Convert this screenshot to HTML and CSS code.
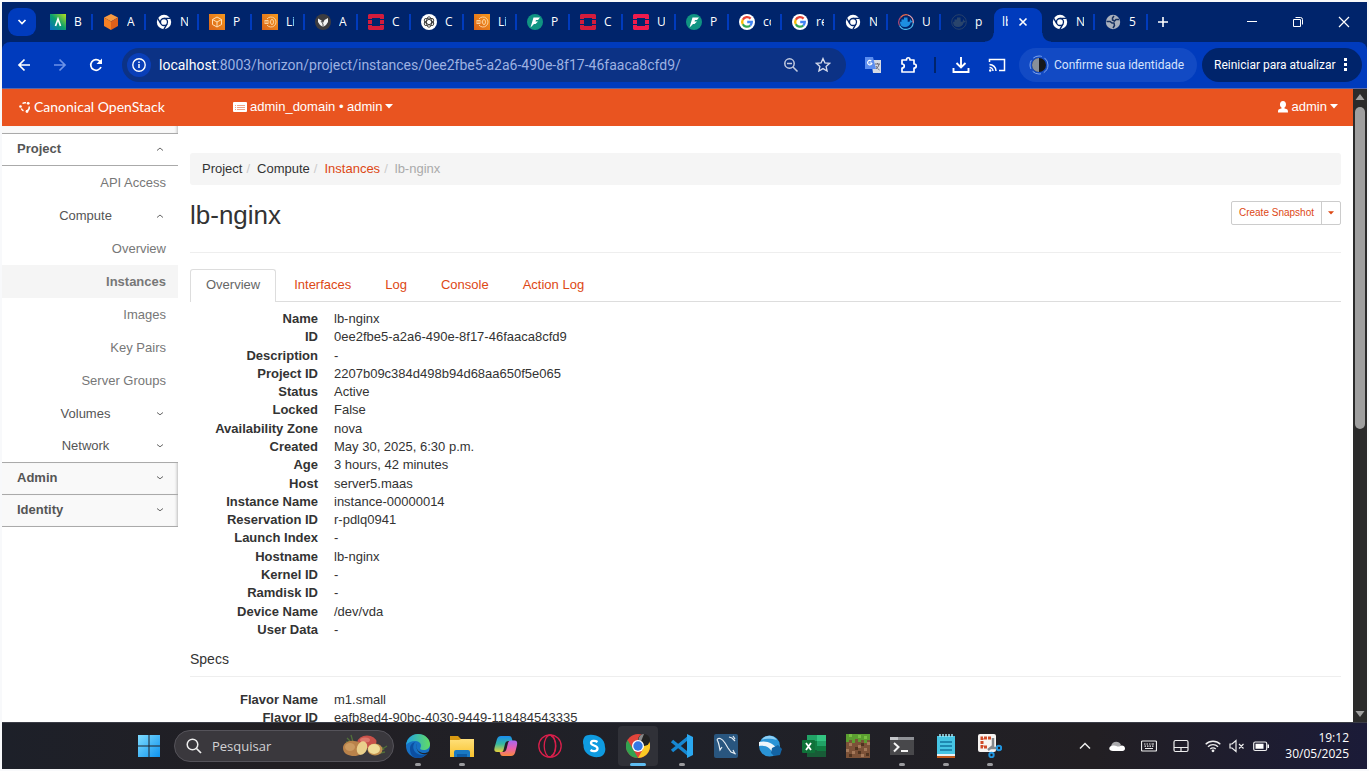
FILE: index.html
```html
<!DOCTYPE html>
<html lang="pt-BR">
<head>
<meta charset="utf-8">
<title>lb-nginx - Canonical OpenStack</title>
<link rel="stylesheet" href="styles.css">
</head>
<body>
<svg class="sprite" aria-hidden="true">
  <defs>
    <linearGradient id="g-orange" x1="0" y1="1" x2="1" y2="0"><stop offset="0" stop-color="#d9641a"/><stop offset="1" stop-color="#f7981d"/></linearGradient>
    <linearGradient id="g-green" x1="0" y1="1" x2="1" y2="0"><stop offset="0" stop-color="#0868c8"/><stop offset=".5" stop-color="#0aa06e"/><stop offset="1" stop-color="#b6e01c"/></linearGradient>
    <linearGradient id="g-win" x1="0" y1="0" x2="1" y2="1"><stop offset="0" stop-color="#7fdcff"/><stop offset="1" stop-color="#0e93ee"/></linearGradient>
    <linearGradient id="g-edge" x1="0" y1="0" x2="1" y2="0"><stop offset="0" stop-color="#1fa2e4"/><stop offset="1" stop-color="#62dc63"/></linearGradient>
    <linearGradient id="g-cop1" x1="0" y1="0" x2="0" y2="1"><stop offset="0" stop-color="#1a8df0"/><stop offset=".5" stop-color="#35b8a0"/><stop offset="1" stop-color="#e8d23a"/></linearGradient>
    <linearGradient id="g-cop2" x1="0" y1="0" x2="0" y2="1"><stop offset="0" stop-color="#a767f0"/><stop offset=".5" stop-color="#e85fb0"/><stop offset="1" stop-color="#f98a3c"/></linearGradient>
    <linearGradient id="g-fold" x1="0" y1="0" x2="0" y2="1"><stop offset="0" stop-color="#ffe07a"/><stop offset="1" stop-color="#f8c22e"/></linearGradient>
  </defs>
  <symbol id="i-chromium" viewBox="0 0 16 16"><circle cx="8" cy="8" r="7.200" fill="#fff"/><path d="M8 4.400h6.500M4.900 9.800 1.600 4.200M11.100 9.800l-3.400 5.800" stroke="#00246b" stroke-width="1.300"/><circle cx="8" cy="8" r="3.500" fill="#fff" stroke="#00246b" stroke-width="1.300"/></symbol>
  <symbol id="i-stack" viewBox="0 0 16 16"><path d="M1 0h14l1 1v4h-4V4H4v1H0V1zM0 6h4v4H0zM12 6h4v4h-4zM0 11h4v1h8v-1h4v4l-1 1H1l-1-1z"/></symbol>
  <symbol id="i-list" viewBox="0 0 16 16"><path fill="url(#g-orange)" d="M0 0h16v16H0z"/><g fill="none" stroke="#ffd9a8" stroke-width=".9"><path d="M5 5a5 5 0 1 1 0 6"/><ellipse cx="10" cy="8" rx="1.500" ry="2.600"/><path d="M2.500 6.500h4M2 8h5.500M2.500 9.500h4"/></g></symbol>
  <symbol id="i-flash" viewBox="0 0 16 16"><circle cx="8" cy="8" r="8" fill="#109482"/><path fill="#fff" d="M6.500 3.500H13l-2 2.500H9L8.500 7.500H11L8.500 10H7l-3.500 3.500z"/></symbol>
  <symbol id="i-google" viewBox="0 0 16 16"><circle cx="8" cy="8" r="8" fill="#fff"/><g fill="none" stroke-width="2.300"><path stroke="#ea4335" d="M11.600 4.600A4.800 4.800 0 0 0 3.800 5.800"/><path stroke="#fbbc05" d="M3.800 5.600a4.800 4.800 0 0 0 0 4.700"/><path stroke="#34a853" d="M3.800 10.200a4.800 4.800 0 0 0 7.400 1.300"/><path stroke="#4285f4" d="M11.200 11.600A4.800 4.800 0 0 0 12.800 8H8.200"/></g></symbol>
  <symbol id="i-whale" viewBox="0 0 16 16"><path d="M2 7.700h9.500c.6-.8.200-1.700.7-2.500.8.500 1.100 1.100 1.200 1.700.6 0 1 .1 1.400.4-.5 1-1.300 1.300-2.100 1.300C12 11.600 10 13 7 13c-3.300 0-5-1.800-5-5.300zM3.500 5.500h6.200v2.400H3.500zM6 3.500h3.500v2H6z"/></symbol>
  <symbol id="i-up" viewBox="0 0 8 8"><path d="M1 5.500 4 3l3 2.500" fill="none" stroke="#666"/></symbol>
  <symbol id="i-down" viewBox="0 0 8 8"><path d="M1 2.500 4 4.800l3-2.300" fill="none" stroke="#666"/></symbol>
  <symbol id="i-caret" viewBox="0 0 8 5"><path d="M0 0h8L4 4.500z" fill="currentColor"/></symbol>
</svg>

<header class="browser">
  <div class="tabstrip">
    <button class="tabsearch" aria-label="Pesquisar guias"><svg viewBox="0 0 10 10" width="10" height="10"><path d="m1.500 3 3.500 3.500L8.500 3" fill="none" stroke="#fff" stroke-width="1.700"/></svg></button>
    <nav class="tabs" aria-label="Guias">
      <button class="tab"><svg class="fav" viewBox="0 0 16 16"><path fill="url(#g-green)" d="M0 0h16v16H0z"/><path d="M5.500 12 8 5l2.500 7" fill="none" stroke="#fff" stroke-width="1.700"/></svg><span>B</span></button>
      <button class="tab"><svg class="fav" viewBox="0 0 16 16"><path fill="#f79a42" d="m8 0 7 3.500L8 7.500 1 3.500z"/><path fill="#f58024" d="M1 3.500 8 7.500V16l-7-4z"/><path fill="#e0601a" d="M15 3.500 8 7.500V16l7-4z"/></svg><span>A</span></button>
      <button class="tab"><svg class="fav"><use href="#i-chromium"/></svg><span>N</span></button>
      <button class="tab"><svg class="fav" viewBox="0 0 16 16"><path fill="url(#g-orange)" d="M0 0h16v16H0z"/><path d="m8 3 4.500 2.500v5L8 13l-4.500-2.500v-5zM3.500 5.500 8 8l4.500-2.500M8 8v5" fill="none" stroke="#ffe0b8"/></svg><span>P</span></button>
      <button class="tab"><svg class="fav"><use href="#i-list"/></svg><span>Li</span></button>
      <button class="tab"><svg class="fav" viewBox="0 0 16 16"><circle cx="8" cy="8" r="8" fill="#3c3c40"/><path fill="#f4f4f4" d="m3 4.500 3.500 2L8 9l1.500-3L13 4v4l-2 3-3 2-3-2-2-3z"/><path d="m6 7 2 3v3" stroke="#555" fill="none"/></svg><span>A</span></button>
      <button class="tab"><svg class="fav stack"><use href="#i-stack"/></svg><span>C</span></button>
      <button class="tab"><svg class="fav" viewBox="0 0 16 16"><circle cx="8" cy="8" r="8" fill="#fff"/><g fill="none" stroke="#333" stroke-width=".9"><ellipse cx="8" cy="8" rx="2.500" ry="5.200"/><ellipse cx="8" cy="8" rx="2.500" ry="5.200" transform="rotate(60 8 8)"/><ellipse cx="8" cy="8" rx="2.500" ry="5.200" transform="rotate(120 8 8)"/></g></svg><span>C</span></button>
      <button class="tab"><svg class="fav"><use href="#i-list"/></svg><span>Li</span></button>
      <button class="tab"><svg class="fav"><use href="#i-flash"/></svg><span>P</span></button>
      <button class="tab"><svg class="fav stack"><use href="#i-stack"/></svg><span>C</span></button>
      <button class="tab"><svg class="fav stack bright"><use href="#i-stack"/></svg><span>U</span></button>
      <button class="tab"><svg class="fav"><use href="#i-flash"/></svg><span>P</span></button>
      <button class="tab"><svg class="fav"><use href="#i-google"/></svg><span>co</span></button>
      <button class="tab"><svg class="fav"><use href="#i-google"/></svg><span>re</span></button>
      <button class="tab"><svg class="fav"><use href="#i-chromium"/></svg><span>N</span></button>
      <button class="tab"><svg class="fav whale" viewBox="0 0 16 16"><use href="#i-whale"/><g fill="none" stroke-width="1.200"><path stroke="#e8694a" d="M2.500 3.500A7.300 7.300 0 0 1 10 1"/><path stroke="#e9a3b0" d="M10 1a7.300 7.300 0 0 1 5.200 8"/><path stroke="#4fb8e8" d="M15.200 9A7.300 7.300 0 0 1 1.500 11.500"/><path stroke="#b04a74" d="M1.500 11.500a7.300 7.300 0 0 1 1-8"/></g></svg><span>U</span></button>
      <button class="tab last"><svg class="fav dim" viewBox="0 0 16 16"><use href="#i-whale"/><circle cx="8" cy="8" r="7.300" fill="none" stroke="#27406a"/></svg><span>p</span></button>
      <button class="tab active"><span>lb</span><svg class="close" viewBox="0 0 10 10"><path d="m1.500 1.500 7 7m0-7-7 7" stroke="#fff" stroke-width="1.600"/></svg></button>
      <button class="tab"><svg class="fav"><use href="#i-chromium"/></svg><span>N</span></button>
      <button class="tab"><svg class="fav" viewBox="0 0 16 16"><circle cx="8" cy="8" r="7.200" fill="#a9b0bd"/><path d="M1.500 7.500H5l2 1.500h2l.5 2.500L8 14M14 5.500h-3L9.500 7 7.500 6V4L9 2" fill="none" stroke="#17305f" stroke-width="1.500"/></svg><span>5</span></button>
    </nav>
    <button class="newtab" aria-label="Nova guia"><svg viewBox="0 0 12 12" width="12" height="12"><path d="M6 1v10M1 6h10" stroke="#fff" stroke-width="1.600"/></svg></button>
    <div class="winctl">
      <button aria-label="Minimizar"><svg viewBox="0 0 12 12" width="12" height="12"><path d="M1 5.500h10" stroke="#fff"/></svg></button>
      <button aria-label="Restaurar"><svg viewBox="0 0 12 12" width="12" height="12"><path d="M1.500 3.500h7v7h-7zM3.500 1.500h5q2 0 2 2v5" fill="none" stroke="#fff"/></svg></button>
      <button aria-label="Fechar"><svg viewBox="0 0 12 12" width="12" height="12"><path d="m1 1 10 10m0-10L1 11" stroke="#fff" stroke-width="1.200"/></svg></button>
    </div>
  </div>

  <div class="toolbar">
    <button class="nav" aria-label="Voltar"><svg viewBox="0 0 16 16" width="16" height="16"><path d="M14 8H3m5.500-5.500L3 8l5.500 5.500" fill="none" stroke="#fff" stroke-width="1.700"/></svg></button>
    <button class="nav" aria-label="Avançar"><svg viewBox="0 0 16 16" width="16" height="16"><path d="M2 8h11M7.500 2.500 13 8l-5.500 5.500" fill="none" stroke="#6d93e8" stroke-width="1.700"/></svg></button>
    <button class="nav" aria-label="Recarregar"><svg viewBox="0 0 16 16" width="16" height="16"><path d="M13 10a5.300 5.300 0 1 1-1.200-5.800L13.500 6" fill="none" stroke="#fff" stroke-width="1.700"/><path d="M14 1.500V7H8.500z" fill="#fff"/></svg></button>
    <div class="omnibox">
      <button class="info" aria-label="Informações do site"><svg viewBox="0 0 16 16" width="16" height="16"><circle cx="8" cy="8" r="6.200" fill="none" stroke="#fff" stroke-width="1.400"/><path d="M8 7v4M8 4.500V6" stroke="#fff" stroke-width="1.500"/></svg></button>
      <label class="host" for="url">localhost</label><input id="url" type="text" value=":8003/horizon/project/instances/0ee2fbe5-a2a6-490e-8f17-46faaca8cfd9/">
      <button aria-label="Zoom"><svg viewBox="0 0 16 16" width="16" height="16"><path d="m10 10 4.500 4.500M4 6.500h5" stroke="#c3cbe0" stroke-width="1.500"/><circle cx="6.500" cy="6.500" r="4.700" fill="none" stroke="#c3cbe0" stroke-width="1.500"/></svg></button>
      <button aria-label="Favorito"><svg viewBox="0 0 16 16" width="16" height="16"><path d="m8 1.500 1.900 4.300 4.700.5-3.500 3.100 1 4.600L8 11.600 3.900 14l1-4.600-3.500-3.100 4.700-.5z" fill="none" stroke="#d5dbec" stroke-width="1.300"/></svg></button>
    </div>
    <div class="tools">
      <button aria-label="Tradutor"><svg viewBox="0 0 18 18" width="18" height="18"><path fill="#d5dae4" d="M7 4h10v13H9z"/><path fill="#5b8def" d="M1 1h8l3 12H1z"/><path d="M8 7H5.500M7.300 5A2.200 2.200 0 1 0 8 7" fill="none" stroke="#fff" stroke-width="1.200"/><path d="M11 8h5M13.500 7v1m1.500 0c-.5 3-2 4-3 5m0-3c1 2 2 3 3.500 4" fill="none" stroke="#667"/></svg></button>
      <button aria-label="Extensões"><svg viewBox="0 0 18 18" width="18" height="18"><path d="M2 4h4.500c0-3 3.500-3 3.500 0h4v4c3 0 3 4 0 4v4H2v-4c3 0 3-4 0-4z" fill="none" stroke="#fff" stroke-width="1.700" stroke-linejoin="round"/></svg></button>
      <i class="divider"></i>
      <button aria-label="Downloads"><svg viewBox="0 0 18 18" width="18" height="18"><path d="M9 1v10M4.500 7 9 11.500 13.500 7M1.500 12v4h15v-4" fill="none" stroke="#fff" stroke-width="1.900"/></svg></button>
      <button aria-label="Transmitir"><svg viewBox="0 0 18 18" width="18" height="18"><path d="M1.500 6V3.500h15v11H11M1.500 8.500a6.500 6.500 0 0 1 6.500 6.500M1.500 11.500A3.500 3.500 0 0 1 5 15" fill="none" stroke="#fff" stroke-width="1.500"/><circle cx="2.200" cy="14.500" r="1.200" fill="#fff"/></svg></button>
    </div>
    <button class="chip"><svg viewBox="0 0 20 20" width="20" height="20"><circle cx="10" cy="10" r="9" fill="none" stroke="#7ea4ee" stroke-dasharray="9 3"/><circle cx="10" cy="10" r="7" fill="#16181c"/><path d="M10 3a7 7 0 0 0 0 14z" fill="#88909a"/></svg>Confirme sua identidade</button>
    <button class="chip dark">Reiniciar para atualizar<svg viewBox="0 0 4 16" width="4" height="16"><path fill="#fff" d="M0 1h3v3H0zm0 5h3v3H0zm0 5h3v3H0z"/></svg></button>
  </div>
</header>

<div class="viewport">
  <div class="page">
    <div class="navbar">
      <a class="brand" href="#"><svg viewBox="0 0 12 12" width="12" height="12"><g fill="none" stroke="#fff" stroke-width="1.500"><path d="M3.500 2.500A4.200 4.200 0 0 1 7 1.800M10.200 5.500a4.200 4.200 0 0 1-3 4.600M4.500 9.800A4.200 4.200 0 0 1 2.300 7.500"/></g><circle cx="1.500" cy="5.500" r="1.300" fill="#fff"/><circle cx="9.200" cy="2.300" r="1.400" fill="#fff"/><circle cx="8" cy="10.500" r="1.400" fill="#fff"/></svg>Canonical OpenStack</a>
      <button class="context"><svg viewBox="0 0 14 12" width="14" height="12"><rect y="1" width="14" height="10" rx="1" fill="#fff"/><path d="M2 4.500h1m1 0h8M2 6.500h1m1 0h8M2 8.500h1m1 0h8" stroke="#f0a488"/></svg>admin_domain • admin<svg width="8" height="5"><use href="#i-caret"/></svg></button>
      <button class="user"><svg viewBox="0 0 12 12" width="12" height="12"><path fill="#fff" d="M6 0c4 0 3.500 6 1.500 6.500v1c3 .5 3.500 1 3.500 4H1c0-3 .5-3.500 3.500-4v-1C2.500 6 2 0 6 0z"/></svg>admin<svg width="8" height="5"><use href="#i-caret"/></svg></button>
    </div>
    <div class="columns">
      <nav class="sidebar" aria-label="Painéis">
        <button class="panel open">Project<svg><use href="#i-up"/></svg></button>
        <a class="item" href="#">API Access</a>
        <button class="group"><span>Compute</span><svg><use href="#i-up"/></svg></button>
        <a class="item" href="#">Overview</a>
        <a class="item current" href="#">Instances</a>
        <a class="item" href="#">Images</a>
        <a class="item" href="#">Key Pairs</a>
        <a class="item" href="#">Server Groups</a>
        <button class="group"><span>Volumes</span><svg><use href="#i-down"/></svg></button>
        <button class="group"><span>Network</span><svg><use href="#i-down"/></svg></button>
        <button class="panel">Admin<svg><use href="#i-down"/></svg></button>
        <button class="panel">Identity<svg><use href="#i-down"/></svg></button>
      </nav>
      <main class="content">
        <ol class="breadcrumb"><li>Project</li><li>Compute</li><li><a href="#">Instances</a></li><li class="here">lb-nginx</li></ol>
        <div class="heading">
          <h1>lb-nginx</h1>
          <div class="actions"><button>Create Snapshot</button><button aria-label="Mais ações"><svg width="6" height="4"><use href="#i-caret"/></svg></button></div>
        </div>
        <nav class="pills"><a class="on" href="#">Overview</a><a href="#">Interfaces</a><a href="#">Log</a><a href="#">Console</a><a href="#">Action Log</a></nav>
        <dl class="details overview">
          <dt>Name</dt><dd>lb-nginx</dd>
          <dt>ID</dt><dd>0ee2fbe5-a2a6-490e-8f17-46faaca8cfd9</dd>
          <dt>Description</dt><dd>-</dd>
          <dt>Project ID</dt><dd>2207b09c384d498b94d68aa650f5e065</dd>
          <dt>Status</dt><dd>Active</dd>
          <dt>Locked</dt><dd>False</dd>
          <dt>Availability Zone</dt><dd>nova</dd>
          <dt>Created</dt><dd>May 30, 2025, 6:30 p.m.</dd>
          <dt>Age</dt><dd>3 hours, 42 minutes</dd>
          <dt>Host</dt><dd>server5.maas</dd>
          <dt>Instance Name</dt><dd>instance-00000014</dd>
          <dt>Reservation ID</dt><dd>r-pdlq0941</dd>
          <dt>Launch Index</dt><dd>-</dd>
          <dt>Hostname</dt><dd>lb-nginx</dd>
          <dt>Kernel ID</dt><dd>-</dd>
          <dt>Ramdisk ID</dt><dd>-</dd>
          <dt>Device Name</dt><dd>/dev/vda</dd>
          <dt>User Data</dt><dd>-</dd>
        </dl>
        <h2>Specs</h2>
        <dl class="details"><dt>Flavor Name</dt><dd>m1.small</dd><dt>Flavor ID</dt><dd>eafb8ed4-90bc-4030-9449-118484543335</dd></dl>
      </main>
    </div>
  </div>
  <div class="scrollbar" aria-hidden="true">
    <svg viewBox="0 0 10 8" width="10" height="8"><path d="M5 1 9.500 7h-9z" fill="#9f9f9f"/></svg>
    <div class="track"><div class="thumb"></div></div>
    <svg viewBox="0 0 10 8" width="10" height="8"><path d="M5 7 .5 1h9z" fill="#9f9f9f"/></svg>
  </div>
</div>

<footer class="taskbar">
  <div class="apps">
    <button class="app" aria-label="Iniciar"><svg viewBox="0 0 24 24"><path fill="url(#g-win)" d="M1 1h10.500v10.500H1zM12.500 1H23v10.500H12.500zM1 12.500h10.500V23H1zM12.500 12.500H23V23H12.500z"/></svg></button>
    <div class="search">
      <svg viewBox="0 0 16 16" width="16" height="16"><circle cx="6.500" cy="6.500" r="5.300" fill="none" stroke="#eee" stroke-width="1.500"/><path d="m10.500 10.500 4.500 4.500" stroke="#eee" stroke-width="1.700"/></svg>
      <input type="text" aria-label="Pesquisar" placeholder="Pesquisar">
      <svg viewBox="0 0 46 24" width="46" height="24"><path d="M5 4l6 6M9 1l2 7M4 8l8 1M36 18l9-6M38 19l5-1M40 13l2 3" stroke="#52703a" stroke-width="1.300"/><ellipse cx="25" cy="8" rx="9.500" ry="6.500" fill="#c8514a"/><ellipse cx="23" cy="6" rx="5" ry="2.500" fill="#dc776b"/><path d="M1 14c0-5 6-8 11-7 6 0 10 4 10 8 0 5-5 7-10 7S1 20 1 14z" fill="#b9824a"/><ellipse cx="8" cy="13" rx="5" ry="4" fill="#cb9a60"/><ellipse cx="20" cy="14" rx="5" ry="7" fill="#ead08c" transform="rotate(20 20 14)"/><ellipse cx="33" cy="15.500" rx="7.500" ry="6" fill="#c09050"/><ellipse cx="32" cy="15" rx="6" ry="5" fill="#f0dc98"/></svg>
    </div>
    <button class="app run" aria-label="Edge"><svg viewBox="0 0 24 24"><circle cx="12" cy="12" r="12" fill="#1670c4"/><path d="M0 11C1 4 6 0 12 0c7 0 12 5 12 10 0 4-3 6-6.500 6-3 0-4-1-3-2.500C16 11 14 7 9.500 7 5 7 1.500 9 0 11z" fill="url(#g-edge)"/><path d="M9 8c-4 5-1 12 6 13 3 0 5-1 6.500-2.500C19.500 22 16 24 12 24 6 24 4 19 4 15s2-6 5-7z" fill="#0c4fa0"/><path d="M11 10c-1.500 3 0 7 4 8.500 3 1 6 .5 8-1 .3 1-.5 1.500-1 2-3 1.500-8 1-10.500-3C10 14 10 11 11 10z" fill="#202126"/></svg></button>
    <button class="app run" aria-label="Explorador de Arquivos"><svg viewBox="0 0 24 24"><path fill="#d99a12" d="M0 2h8l3 3h13v4H0z"/><path fill="url(#g-fold)" d="M0 6h9l2-1h13v18H0z"/><path fill="#1979c4" d="M4 23v-5q0-2 2-2h12q2 0 2 2v5h-3v-3H7v3z"/><path fill="#0d5ca5" d="M7 20h10v3H7z"/></svg></button>
    <button class="app" aria-label="Copilot"><svg viewBox="0 0 24 24"><path fill="url(#g-cop1)" d="M7 2h8c2 0 2.500 1 3 3l.5 2h-4c-2 0-3 1-3.500 3l-1.500 6C9 18 8 18 6 18H3c-3 0-3-2-2.300-5L3 5c.8-2 2-3 4-3z"/><path fill="url(#g-cop2)" d="M17 22H9c-2 0-2.500-1-3-3l-.5-1H9c2 0 3-1 3.500-3L14 9c.5-2 1.500-2.500 3.500-2.500h3c3 0 3 2.500 2.300 5.500L21 19c-.8 2-2 3-4 3z"/></svg></button>
    <button class="app" aria-label="Opera"><svg viewBox="0 0 24 24" fill="none" stroke="#d91f4b" stroke-width="1.300"><circle cx="12" cy="12" r="11.200"/><ellipse cx="12" cy="12" rx="5.800" ry="11"/><path d="M13 2c6 3 6 17 0 20"/></svg></button>
    <button class="app" aria-label="Skype"><svg viewBox="0 0 24 24"><path fill="#0f9be0" d="M7 1c7-1 16 3 16 12 1 3 0 9-6 10C9 24 1 19 1.500 11 0 6 2 1 7 1z"/><path d="M15.500 8C13 6.300 9 6.500 9 9c0 3 6.500 2 6.500 5.500 0 3-4.500 3.500-7 1.500" fill="none" stroke="#fff" stroke-width="2.300"/></svg></button>
    <button class="app run focus" aria-label="Chrome"><svg viewBox="0 0 24 24"><circle cx="12" cy="12" r="12" fill="#e1443a"/><path fill="#32a350" d="M1.500 6 7 15l5 9A12 12 0 0 1 1.500 6z"/><path fill="#fbc924" d="M12 24l5-9V7h6a12 12 0 0 1-11 17z"/><circle cx="18" cy="6" r="6" fill="#222"/><path fill="#888" d="M18 0a6 6 0 0 0-4 10z"/><circle cx="12" cy="12" r="6" fill="#fff"/><circle cx="12" cy="12" r="4.700" fill="#3478e5"/></svg></button>
    <button class="app run" aria-label="VS Code"><svg viewBox="0 0 24 24"><path d="m2 7 16 13M2 17 18 4" stroke="#1688d2" stroke-width="3.500" fill="none"/><path d="m17 0 6 3v18l-6 3z" fill="#2aa8f0"/></svg></button>
    <button class="app" aria-label="MySQL Workbench"><svg viewBox="0 0 24 24"><rect width="24" height="24" rx="2" fill="#29567f"/><path d="M3 6c1-3 5-2 8 3l3 5 3 4 5 2m-3-4 2 4M3 6c2 2 2 6 3 10l2-3m7-10 3 1 3 3m-2-5 2 3" fill="none" stroke="#e6edf3" stroke-width="1.200"/></svg></button>
    <button class="app" aria-label="Workspace"><svg viewBox="0 0 24 24"><circle cx="11.500" cy="12" r="10.500" fill="#2a94d6"/><path fill="#eef6fb" d="M1 8c7-2 15 1 19 8l-5 4C13 14 8 11 1 12z"/><path fill="#8fd0f5" d="M3 6c4-5 12-6 16 0-5-1-11-2-16 0z"/><path fill="#1364a4" d="m14 14 6-3 4 4-2 6-6 1-3-3z"/></svg></button>
    <button class="app" aria-label="Excel"><svg viewBox="0 0 24 24"><path fill="#21a366" d="M5 1h19v22H5z"/><path fill="#33c481" d="M15 1h9v6h-9z"/><path fill="#185c37" d="M5 16h19v7H5z"/><path fill="#107c41" d="M15 12h9v5h-9zM5 7h10v9H5z"/><rect y="6" width="13" height="13" rx="1" fill="#0f7239"/><path d="m4 9 5 7m0-7-5 7" stroke="#fff" stroke-width="1.800"/></svg></button>
    <button class="app" aria-label="Minecraft"><svg viewBox="0 0 24 24"><path fill="#7c5238" d="M0 0h24v24H0z"/><path fill="#5b9f31" d="M0 0h24v6h-3v3h-3V6h-3v2h-3V5H9v4H6V6H3v2H0z"/><path fill="#78c043" d="M3 0h3v3H3zM12 1h3v3h-3zM18 2h3v3h-3z"/><path fill="#a5795a" d="M3 9h3v3H3zM12 11h3v3h-3zM18 14h3v3h-3zM6 17h3v3H6zM15 20h3v3h-3zM0 15h3v3H0zM21 8h3v3h-3z"/><path fill="#503420" d="M9 13h3v3H9zM3 20h3v3H3zM15 9h3v3h-3zM20 19h3v3h-3zM12 17h3v3h-3z"/></svg></button>
    <button class="app run" aria-label="Terminal"><svg viewBox="0 0 24 24"><path fill="#48484b" d="M0 3h24v18H0z"/><path fill="#c4c6ca" d="M0 3h24v3H0z"/><path fill="#8f9196" d="M8 3h16v3H8z"/><path d="m4 9 4.500 4L4 17.500M11 17h7" fill="none" stroke="#f4f4f4" stroke-width="2"/></svg></button>
    <button class="app run" aria-label="Bloco de Notas"><svg viewBox="0 0 24 24"><path fill="#46c5e4" d="M3 2h18v19H3z"/><path fill="#e8f3f7" d="M3 20h18v2H3z"/><path fill="#c35a1c" d="M3 22h18v2H3z"/><path d="M6 0v3m3-3v3m3-3v3m3-3v3m3-3v3" stroke="#a5e6f5" stroke-width="1.500"/><path d="M6 8h12M6 12h12M6 16h12" stroke="#12749f" stroke-width="1.600"/></svg></button>
    <button class="app run" aria-label="Ferramenta de Captura"><svg viewBox="0 0 24 24"><rect width="18" height="18" rx="2" fill="#f7f4f2"/><path d="M13 4H4v9h5" fill="none" stroke="#d04a28" stroke-width="3" stroke-dasharray="3 1"/><path d="M15 4v8l-5 4M13 14h7" stroke="#85888c" stroke-width="2.500" fill="none"/><circle cx="21" cy="14" r="2.200" fill="none" stroke="#2196e0" stroke-width="2"/><circle cx="13.500" cy="21" r="2.200" fill="none" stroke="#2196e0" stroke-width="2"/></svg></button>
  </div>
  <div class="tray">
    <svg viewBox="0 0 16 16"><path d="m3 10.500 5-5 5 5" fill="none" stroke="#eee" stroke-width="1.500"/></svg>
    <svg viewBox="0 0 16 16"><path fill="#a9a9ac" d="M2 8c1-5 8-6 10-1l-5 5z"/><path fill="#fff" d="M4 13c-5 0-5-5 0-5.500 3-.5 4 1.500 6 1 3-2 6-.5 6 2 0 1.500-1 2.500-2.500 2.500z"/></svg>
    <svg viewBox="0 0 16 16"><rect x=".5" y="3" width="15" height="10" rx="1" fill="none" stroke="#eee" stroke-width="1.200"/><path d="M3 6h1.500m1 0H7m1 0h1.500m1 0H13M3.500 8.200H5m1 0h1.500m1 0H10m1 0h1.500M4 10.500h8" stroke="#eee" stroke-width="1.200"/></svg>
    <svg viewBox="0 0 16 16"><rect x="1" y="2.500" width="14" height="11" rx="1.500" fill="none" stroke="#eee" stroke-width="1.200"/><path d="M1 9.500h14m-7 0v4" stroke="#eee" stroke-width="1.200"/></svg>
    <div class="status">
      <svg viewBox="0 0 16 16"><g fill="none" stroke="#eee" stroke-width="1.400"><path d="M.7 6.300a10.300 10.300 0 0 1 14.600 0M3 8.700a7 7 0 0 1 10 0M5.300 11a3.800 3.800 0 0 1 5.400 0"/></g><circle cx="8" cy="12.800" r="1.400" fill="#eee"/></svg>
      <svg viewBox="0 0 16 16"><path d="M1 6h2l4-3.500v11L3 10H1zM10 6l4.500 4.500m0-4.500L10 10.500" fill="none" stroke="#eee" stroke-width="1.200"/></svg>
      <svg viewBox="0 0 16 16"><rect x=".7" y="4" width="13" height="8.500" rx="1.500" fill="none" stroke="#eee" stroke-width="1.200"/><path d="M2.500 5.700h8v5h-8zM14.500 6.500H16V10h-1.500z" fill="#fff"/></svg>
    </div>
    <time class="clock"><span>19:12</span><span>30/05/2025</span></time>
  </div>
</footer>
</body>
</html>
```
FILE: styles.css
```css
* { box-sizing: border-box; }

body {
  margin: 0;
  padding: 2px;
  height: 100vh;
  display: flex;
  flex-direction: column;
  overflow: hidden;
  background: #f8f9fb;
  color: #333;
  font: 13px/18px "Liberation Sans", Arial, sans-serif;
}

button {
  border: 0;
  padding: 0;
  background: none;
  color: inherit;
  font: inherit;
}

input { border: 0; padding: 0; background: none; font: inherit; outline: 0; }
a { color: #dd4814; text-decoration: none; }
svg { display: block; flex: none; }
.sprite { position: absolute; width: 0; height: 0; }

/* Browser frame */
.browser {
  background: #00246b;
  color: #fff;
  font: 12px/16px "Open Sans", "Noto Sans", sans-serif;
  border-bottom: 1px solid #5a68a8;
}

.tabstrip { display: flex; height: 40px; }

.tabsearch {
  flex: none;
  display: grid;
  place-items: center;
  width: 28px;
  height: 28px;
  margin: 6px 4px 6px 6px;
  border-radius: 9px;
  background: #003bbd;
}

.tabs { display: flex; flex: 0 1 auto; min-width: 0; }

.tab {
  position: relative;
  flex: 0 1 53px;
  width: 53px;
  display: flex;
  align-items: center;
  gap: 8px;
  padding: 0 10px;
  min-width: 0;
}

.tab::after {
  content: "";
  position: absolute;
  right: 0;
  top: 12px;
  width: 2px;
  height: 16px;
  background: #003bbd;
}

.tab span { width: 8px; overflow: hidden; text-align: left; white-space: nowrap; }
.fav { width: 16px; height: 16px; }
.stack { fill: #d31c3c; }
.bright { fill: #f01b4c; }
.whale { fill: #1d8fe0; }
.dim { fill: #29446c; }

.tab.active {
  flex-basis: 48px;
  align-self: flex-end;
  height: 34px;
  padding: 0 0 6px 8px;
  gap: 10px;
  border-radius: 9px 9px 0 0;
  background: #003bbd;
}

.tab.last::after { display: none; }

.tab.active::before,
.tab.active::after {
  content: "";
  position: absolute;
  top: auto;
  bottom: 0;
  width: 9px;
  height: 9px;
}

.tab.active::before { left: -9px; background: radial-gradient(circle at 0 0, transparent 8px, #003bbd 9px); }
.tab.active::after { right: -9px; background: radial-gradient(circle at 100% 0, transparent 8px, #003bbd 9px); }
.tab.active span { width: 6px; }
.close { width: 10px; height: 10px; }

.newtab { flex: none; width: 30px; display: grid; place-items: center; }
.winctl { display: flex; margin-left: auto; }
.winctl button { width: 46px; display: grid; place-items: center; }

.toolbar {
  display: flex;
  align-items: center;
  height: 46px;
  padding: 0 5px 0 4px;
  border-radius: 8px 8px 0 0;
  background: #003bbd;
}

.nav { flex: none; width: 36px; height: 34px; display: grid; place-items: center; }

.omnibox {
  flex: 1;
  min-width: 0;
  display: flex;
  align-items: center;
  height: 34px;
  margin: 0 9px 0 8px;
  padding: 0 7px 0 5px;
  border-radius: 17px;
  background: #0c3285;
  font: 14px/20px Roboto, "Open Sans", sans-serif;
}

.omnibox button { flex: none; width: 32px; display: grid; place-items: center; }
.omnibox .info { width: 24px; height: 24px; margin-right: 8px; border-radius: 50%; background: #0a3fb8; }
.omnibox input { flex: 1; min-width: 0; color: #9db1e2; }

.tools { display: flex; align-items: center; margin-right: 4px; }
.tools button { width: 36px; display: grid; place-items: center; }
.divider { width: 2px; height: 16px; margin: 0 7px; background: #00246b; }

.chip {
  flex: none;
  display: flex;
  align-items: center;
  gap: 5px;
  min-width: 178px;
  height: 34px;
  margin-right: 5px;
  padding: 0 10px;
  border-radius: 17px;
  background: #124ac4;
  color: #d6e2fd;
  font-family: Roboto, "Open Sans", sans-serif;
}

.chip.dark {
  justify-content: space-between;
  min-width: 160px;
  margin: 0;
  padding: 0 14px 0 12px;
  background: #00246b;
  color: #fff;
}

/* Page area */
.viewport { flex: 1; min-height: 0; display: flex; }
.page { flex: 1; min-width: 0; overflow: hidden; background: #fff; }

.navbar {
  display: flex;
  align-items: center;
  height: 37px;
  padding: 0 15px 2px 17px;
  background: #e95420;
  color: #fff;
}

.brand {
  flex: none;
  display: flex;
  align-items: center;
  gap: 3px;
  width: 214px;
  color: #fff;
  font: 14px/18px Lato, "Open Sans", sans-serif;
}

.context, .user { display: flex; align-items: center; gap: 3px; }
.user { margin-left: auto; }

.columns { display: flex; }
.sidebar { flex: none; width: 176px; display: flex; flex-direction: column; }
.sidebar::before { content: ""; height: 7px; background: #f9f9f9; box-shadow: inset -3px 0 3px -2px #bbb; }

.panel {
  display: flex;
  align-items: center;
  justify-content: space-between;
  height: 32px;
  padding: 0 14px 2px 15px;
  border-bottom: 1px solid #aaa;
  background: #f9f9f9;
  box-shadow: inset -3px 0 3px -2px #bbb;
  color: #555;
  font-weight: bold;
}

.panel.open, .group + .panel { height: 33px; border-top: 1px solid #aaa; }
.panel.open { background: #fff; box-shadow: none; }
.sidebar button svg { width: 8px; height: 8px; }

.group { display: flex; align-items: center; height: 33px; padding: 0 14px 0 13px; color: #555; }
.group + .group { height: 32px; }
.group span { flex: 1; text-align: center; }
.item { height: 33px; padding-right: 12px; line-height: 33px; text-align: right; color: #777; }
.item.current { background: #f5f5f5; font-weight: bold; }

.content { flex: 1; min-width: 0; padding: 27px 12px 0; }

.breadcrumb {
  display: flex;
  margin: 0;
  padding: 7px 12px;
  list-style: none;
  border-radius: 3px;
  background: #f5f5f5;
}

.breadcrumb li + li::before { content: "/"; padding: 0 7px 0 4px; color: #ccc; }
.breadcrumb .here { color: #aaa; }

.heading {
  display: flex;
  justify-content: space-between;
  align-items: flex-start;
  padding: 16px 0 23px;
  border-bottom: 1px solid #eee;
}

h1 { margin: 0; font-size: 26px; line-height: 28px; font-weight: normal; }

.actions { display: flex; height: 24px; border: 1px solid #ccc; border-radius: 2px; color: #dd4814; font-size: 10px; line-height: 14px; }
.actions button { padding: 0 7px 1px; }
.actions button + button { padding: 0 6px; border-left: 1px solid #ccc; }

.pills { display: flex; gap: 2px; margin-top: 16px; border-bottom: 1px solid #ddd; }
.pills a { height: 32px; padding: 6px 15px; border: 1px solid transparent; border-bottom: 0; }
.pills .on { height: 33px; margin-bottom: -1px; border-color: #ddd; border-radius: 3px 3px 0 0; background: #fff; color: #666; }

.details { display: grid; grid-template-columns: 128px 1fr; column-gap: 16px; margin: 8px 0 0; }
.details dt { text-align: right; font-weight: bold; }
.details dd { margin: 0; }
.overview { min-height: 329px; align-content: space-between; }

h2 { margin: 11px 0 14px; padding-bottom: 8px; border-bottom: 1px solid #eee; font-size: 14px; line-height: 18px; font-weight: normal; }

.scrollbar { flex: none; width: 14px; display: flex; flex-direction: column; align-items: center; padding: 4px 0; background: #2b2b2b; }
.track { flex: 1; width: 10px; padding: 6px 0; }
.thumb { height: 54%; border-radius: 5px; background: #9f9f9f; }

/* Desktop taskbar */
.taskbar {
  flex: none;
  display: flex;
  justify-content: space-between;
  height: 47px;
  padding: 0 18px 0 125px;
  border-top: 1px solid #3b3d47;
  background: linear-gradient(90deg, #1d2029, #221f23 20%, #1f2129 50%, #221f23 80%, #1b1b38);
  color: #fff;
  font: 12px/16px "Open Sans", "Noto Sans", sans-serif;
}

.apps, .tray { display: flex; align-items: center; }

.app { position: relative; width: 44px; height: 40px; display: grid; place-items: center; border-radius: 4px; }
.app svg { width: 24px; height: 24px; }
.app.focus { width: 40px; margin: 0 2px; background: #303138; }

.run::after {
  content: "";
  position: absolute;
  left: 50%;
  bottom: 0;
  width: 6px;
  height: 3px;
  margin-left: -3px;
  border-radius: 2px;
  background: #9a9a9e;
}

.focus::after { width: 16px; margin-left: -8px; background: #5fbcf0; }

.search {
  display: flex;
  align-items: center;
  gap: 10px;
  width: 220px;
  height: 32px;
  margin: 0 2px 0 3px;
  padding: 0 5px 0 11px;
  border: 1px solid #55535a;
  border-radius: 16px;
  background: #3a383d;
  font-size: 13px;
}

.search input { flex: 1; min-width: 0; color: #fff; }
.search input::placeholder { color: #d2d2d4; opacity: 1; }

.tray { gap: 16px; }
.tray svg { width: 16px; height: 16px; }
.status { display: flex; gap: 8px; }
.clock { display: flex; flex-direction: column; align-items: flex-end; }
```
